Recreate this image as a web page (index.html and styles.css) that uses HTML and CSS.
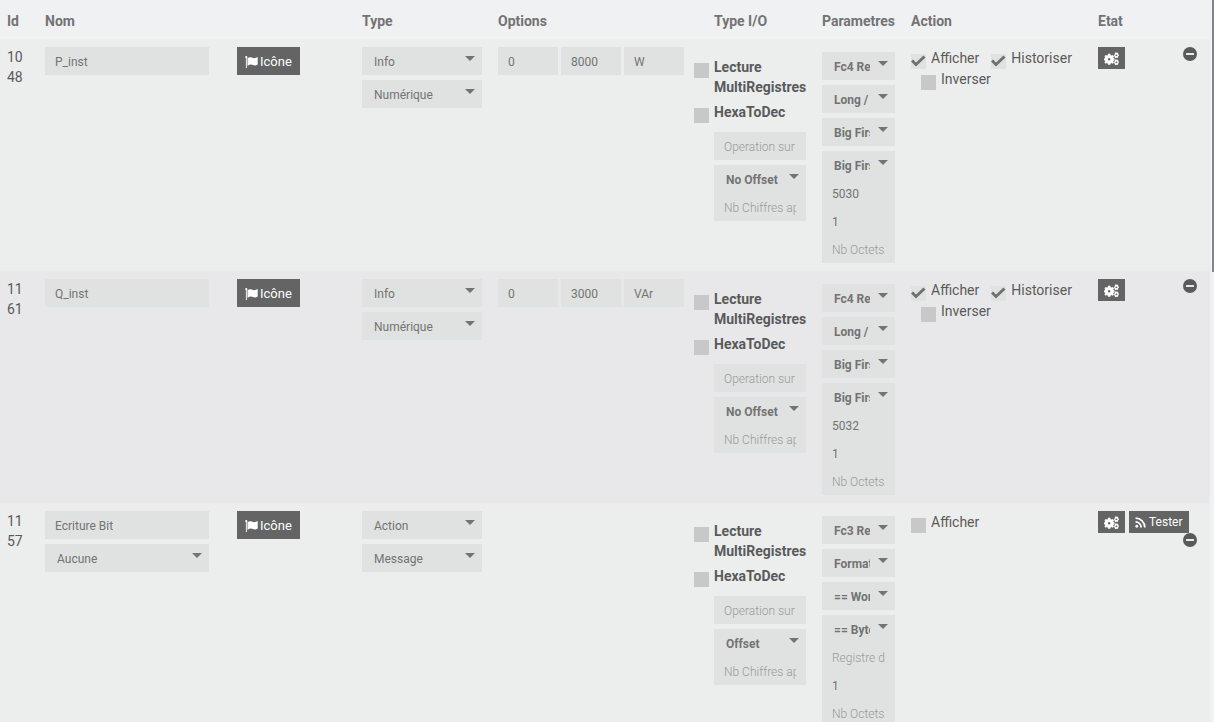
FILE: index.html
```html
<!DOCTYPE html>
<html lang="fr">
<head>
<meta charset="utf-8">
<title>Commandes</title>
<link rel="stylesheet" href="styles.css">
</head>
<body>
<svg class="sprite" aria-hidden="true">
  <symbol id="flag" viewBox="0 0 13 12"><path d="M.2 1.200a1.100 1.100 0 1 1 1.600.9V12H.9V2.100A1.100 1.100 0 0 1 .2 1.200zM2.500 2.200C5.200.7 6.600 1.300 8 1.900s2.600.2 4.700-.9v7.500c-2.100 1.200-3.300 1.200-4.700.6s-2.800-.9-5.500.7z"/></symbol>
  <symbol id="cogs" viewBox="0 0 16 14"><path fill-rule="evenodd" d="M4.300 2h2.400l.3 1.500 1 .4 1.200-.8 1.500 1.500-.8 1.200.4.900 1.100.2v2l-1.100.3-.4.9.8 1.200-1.500 1.400-1.200-.8-1 .4-.3 1.300H4.300L4 12.300l-1-.4-1.200.8L.4 11.300l.8-1.200-.4-.9L0 8.900v-2l.8-.2.4-.9L.4 4.600 1.800 3.100l1.200.8 1-.4zM5.500 6.500a1.300 1.300 0 1 0 0 2.600 1.300 1.300 0 0 0 0-2.600z"/><path fill-rule="evenodd" d="M12.500.4l.8.500 1-.3.9.7-.1.900.8.700v1.200l-.8.700.1.900-.9.700-1-.3-.8.500-.9-.5-.1-.9-.6-.7V3.100l.6-.7.100-1zM13.300 2.600a1 1 0 1 0 0 2 1 1 0 0 0 0-2zM12.500 7.900l.8.500 1-.3.9.7-.1.900.8.700v1.200l-.8.700.1.900-.9.700-1-.3-.8.500-.9-.5-.1-.9-.6-.7v-1.400l.6-.7.100-1zM13.300 10.100a1 1 0 1 0 0 2 1 1 0 0 0 0-2z"/></symbol>
  <symbol id="rss" viewBox="0 0 12 12"><circle cx="2" cy="10" r="1.600"/><path d="M.6 5.300a6.100 6.100 0 0 1 6.100 6.100M.6 1.300a10.100 10.100 0 0 1 10.100 10.100" fill="none" stroke="currentColor" stroke-width="1.900"/></symbol>
  <symbol id="minus" viewBox="0 0 14 14"><path fill-rule="evenodd" d="M7 0a7 7 0 1 0 0 14A7 7 0 0 0 7 0zM3.500 6h7q.5 0 .5.500v1q0 .5-.5.500h-7Q3 8 3 7.500v-1Q3 6 3.500 6z"/></symbol>
</svg>
<main class="page">
<table class="commands">
  <colgroup><col class="c-id"><col><col class="c-type"><col class="c-options"><col class="c-io"><col class="c-params"><col class="c-action"><col class="c-state"></colgroup>
  <thead>
    <tr><th>Id</th><th>Nom</th><th>Type</th><th>Options</th><th>Type I/O</th><th>Parametres</th><th>Action</th><th>Etat</th></tr>
  </thead>
  <tbody>
    <tr>
      <td class="id">1048</td>
      <td><div class="name"><div class="stack"><input class="field" aria-label="Nom" value="P_inst"></div><button class="btn btn-icon"><svg class="i-flag"><use href="#flag"/></svg>Icône</button></div></td>
      <td><div class="stack"><select class="field" aria-label="Type"><option>Info</option></select><select class="field" aria-label="Sous-type"><option>Numérique</option></select></div></td>
      <td><div class="options"><input class="field" aria-label="Min" value="0"><input class="field" aria-label="Max" value="8000"><input class="field" aria-label="Unité" value="W"></div></td>
      <td><div class="io">
        <label class="check strong"><input type="checkbox"><span>Lecture MultiRegistres</span></label>
        <label class="check strong"><input type="checkbox"><span>HexaToDec</span></label>
        <input class="field operation" aria-label="Opération" placeholder="Operation sur">
        <select class="field" aria-label="Offset"><option>No Offset</option></select>
        <input class="field" aria-label="Nb Chiffres" placeholder="Nb Chiffres après">
      </div></td>
      <td><div class="params">
        <select class="field" aria-label="Fonction"><option>Fc4 Read</option></select>
        <select class="field" aria-label="Format"><option>Long / Integer</option></select>
        <select class="field" aria-label="Word"><option>Big First</option></select>
        <select class="field" aria-label="Byte"><option>Big First</option></select>
        <input class="field" aria-label="Registre" value="5030"><input class="field" aria-label="Nombre" value="1"><input class="field" aria-label="Octets" placeholder="Nb Octets">
      </div></td>
      <td><div class="actions">
        <label class="check"><input type="checkbox" checked><span>Afficher</span></label><label class="check"><input type="checkbox" checked><span>Historiser</span></label><label class="check inverse"><input type="checkbox"><span>Inverser</span></label>
      </div></td>
      <td><div class="state"><button class="btn small" aria-label="Configurer"><svg class="i-cogs"><use href="#cogs"/></svg></button><button class="remove" aria-label="Supprimer"><svg><use href="#minus"/></svg></button></div></td>
    </tr>
    <tr>
      <td class="id">1161</td>
      <td><div class="name"><div class="stack"><input class="field" aria-label="Nom" value="Q_inst"></div><button class="btn btn-icon"><svg class="i-flag"><use href="#flag"/></svg>Icône</button></div></td>
      <td><div class="stack"><select class="field" aria-label="Type"><option>Info</option></select><select class="field" aria-label="Sous-type"><option>Numérique</option></select></div></td>
      <td><div class="options"><input class="field" aria-label="Min" value="0"><input class="field" aria-label="Max" value="3000"><input class="field" aria-label="Unité" value="VAr"></div></td>
      <td><div class="io">
        <label class="check strong"><input type="checkbox"><span>Lecture MultiRegistres</span></label>
        <label class="check strong"><input type="checkbox"><span>HexaToDec</span></label>
        <input class="field operation" aria-label="Opération" placeholder="Operation sur">
        <select class="field" aria-label="Offset"><option>No Offset</option></select>
        <input class="field" aria-label="Nb Chiffres" placeholder="Nb Chiffres après">
      </div></td>
      <td><div class="params">
        <select class="field" aria-label="Fonction"><option>Fc4 Read</option></select>
        <select class="field" aria-label="Format"><option>Long / Integer</option></select>
        <select class="field" aria-label="Word"><option>Big First</option></select>
        <select class="field" aria-label="Byte"><option>Big First</option></select>
        <input class="field" aria-label="Registre" value="5032"><input class="field" aria-label="Nombre" value="1"><input class="field" aria-label="Octets" placeholder="Nb Octets">
      </div></td>
      <td><div class="actions">
        <label class="check"><input type="checkbox" checked><span>Afficher</span></label><label class="check"><input type="checkbox" checked><span>Historiser</span></label><label class="check inverse"><input type="checkbox"><span>Inverser</span></label>
      </div></td>
      <td><div class="state"><button class="btn small" aria-label="Configurer"><svg class="i-cogs"><use href="#cogs"/></svg></button><button class="remove" aria-label="Supprimer"><svg><use href="#minus"/></svg></button></div></td>
    </tr>
    <tr>
      <td class="id">1157</td>
      <td><div class="name"><div class="stack"><input class="field" aria-label="Nom" value="Ecriture Bit"><select class="field" aria-label="Info liée"><option>Aucune</option></select></div><button class="btn btn-icon"><svg class="i-flag"><use href="#flag"/></svg>Icône</button></div></td>
      <td><div class="stack"><select class="field" aria-label="Type"><option>Action</option></select><select class="field" aria-label="Sous-type"><option>Message</option></select></div></td>
      <td></td>
      <td><div class="io">
        <label class="check strong"><input type="checkbox"><span>Lecture MultiRegistres</span></label>
        <label class="check strong"><input type="checkbox"><span>HexaToDec</span></label>
        <input class="field operation" aria-label="Opération" placeholder="Operation sur">
        <select class="field" aria-label="Offset"><option>Offset</option></select>
        <input class="field" aria-label="Nb Chiffres" placeholder="Nb Chiffres après">
      </div></td>
      <td><div class="params">
        <select class="field" aria-label="Fonction"><option>Fc3 Read</option></select>
        <select class="field" aria-label="Format"><option>Format</option></select>
        <select class="field" aria-label="Word"><option>== Word</option></select>
        <select class="field" aria-label="Byte"><option>== Byte</option></select>
        <input class="field" aria-label="Registre" placeholder="Registre de"><input class="field" aria-label="Nombre" value="1"><input class="field" aria-label="Octets" placeholder="Nb Octets">
      </div></td>
      <td><div class="actions"><label class="check"><input type="checkbox"><span>Afficher</span></label></div></td>
      <td><div class="state"><button class="btn small" aria-label="Configurer"><svg class="i-cogs"><use href="#cogs"/></svg></button><button class="btn small"><svg class="i-rss"><use href="#rss"/></svg>Tester</button><button class="remove" aria-label="Supprimer"><svg><use href="#minus"/></svg></button></div></td>
    </tr>
  </tbody>
</table>
<div class="scroll-thumb"></div>
</main>
</body>
</html>
```
FILE: styles.css
```css
* { box-sizing: border-box; }
body {
  margin: 0;
  background: #eff1f3;
  color: #5a5a5a;
  font: 14px/20px Roboto, sans-serif;
}
.sprite { display: none; }
.page {
  position: relative;
  height: 100vh;
  padding-right: 4px;
  overflow: hidden;
}
.scroll-thumb {
  position: absolute;
  top: 0;
  right: 0;
  width: 2px;
  height: 272px;
  background: #85858f;
}

.commands {
  width: 100%;
  table-layout: fixed;
  border-collapse: collapse;
}
.c-id { width: 37px; }
.c-type { width: 136px; }
.c-options { width: 216px; }
.c-io { width: 108px; }
.c-params { width: 89px; }
.c-action { width: 187px; }
.c-state { width: 120px; }
th {
  height: 39px;
  padding: 3px 8px 0;
  color: #737373;
  font-weight: 700;
  text-align: left;
  white-space: nowrap;
}
th:first-child { padding-left: 7px; }
td {
  padding: 8px;
  vertical-align: top;
}
tbody tr { background: #eceeed; }
tbody tr:nth-child(even) { background: #e8e8ea; }
.id {
  padding-left: 7px;
  word-break: break-all;
}

.field {
  display: block;
  width: 100%;
  height: 28px;
  margin: 0;
  padding: 2px 10px 0;
  border: 0;
  border-radius: 0;
  background: #e0e2e1;
  color: #737373;
  font: 12px/26px Roboto, sans-serif;
}
.field::placeholder {
  color: #999;
  font-weight: 300;
  opacity: 1;
}
select.field {
  appearance: none;
  padding: 2px 25px 0 12px;
  background: #e0e2e1 url("data:image/svg+xml,%3Csvg xmlns='http://www.w3.org/2000/svg' width='10' height='5'%3E%3Cpath d='M0 0h10L5 5z' fill='%23737373'/%3E%3C/svg%3E") no-repeat right 7px top 9px;
}
.stack {
  display: flex;
  flex-direction: column;
  gap: 5px;
}
.name {
  display: flex;
  align-items: flex-start;
  gap: 28px;
}
.name .stack { width: 164px; }
.options {
  display: flex;
  gap: 3px;
}
.options .field { width: 60px; }
.io { padding-top: 10px; }
.io select, .params select {
  margin-top: 5px;
  font-weight: 700;
}
.operation { margin-top: 9px; }

.check {
  display: flex;
  gap: 5px;
}
.check input {
  appearance: none;
  flex: none;
  width: 15px;
  height: 15px;
  margin: 6px 0 0;
  background: #c8c8c8;
}
.check input:checked {
  background: #e0e2e1 url("data:image/svg+xml,%3Csvg xmlns='http://www.w3.org/2000/svg' width='15' height='15'%3E%3Cpath d='M1 6.500l4 4L13.500 2.500' fill='none' stroke='%23707070' stroke-width='3'/%3E%3C/svg%3E");
}
.strong {
  margin-left: -20px;
  font-weight: 700;
}
.strong + .strong { margin-top: 5px; }
.actions {
  display: flex;
  flex-wrap: wrap;
  column-gap: 12px;
}
.actions .check input { margin-top: 7px; }
.actions .check { height: 21px; }
.actions .inverse { margin-left: 10px; }
.actions span { line-height: 22px; }

.btn {
  display: flex;
  align-items: center;
  border: 0;
  background: #646464;
  color: #fff;
  font: 13px/20px Roboto, sans-serif;
  white-space: nowrap;
}
.btn svg, .remove svg { fill: currentColor; }
.btn-icon {
  height: 28px;
  gap: 2px;
  padding: 1px 8px 0;
}
.small {
  height: 22px;
  gap: 3px;
  padding: 0 6px;
  font-size: 12px;
}
.i-flag { width: 13px; height: 12px; }
.i-cogs { width: 15px; height: 13px; }
.i-rss { width: 11px; height: 11px; }
.state {
  display: flex;
  flex-wrap: wrap;
  align-items: flex-start;
  column-gap: 4px;
  padding-right: 5px;
}
.remove {
  width: 14px;
  height: 14px;
  margin-left: auto;
  padding: 0;
  border: 0;
  background: none;
  color: #5a5a5a;
}
.remove svg {
  display: block;
  width: 14px;
  height: 14px;
}
```
